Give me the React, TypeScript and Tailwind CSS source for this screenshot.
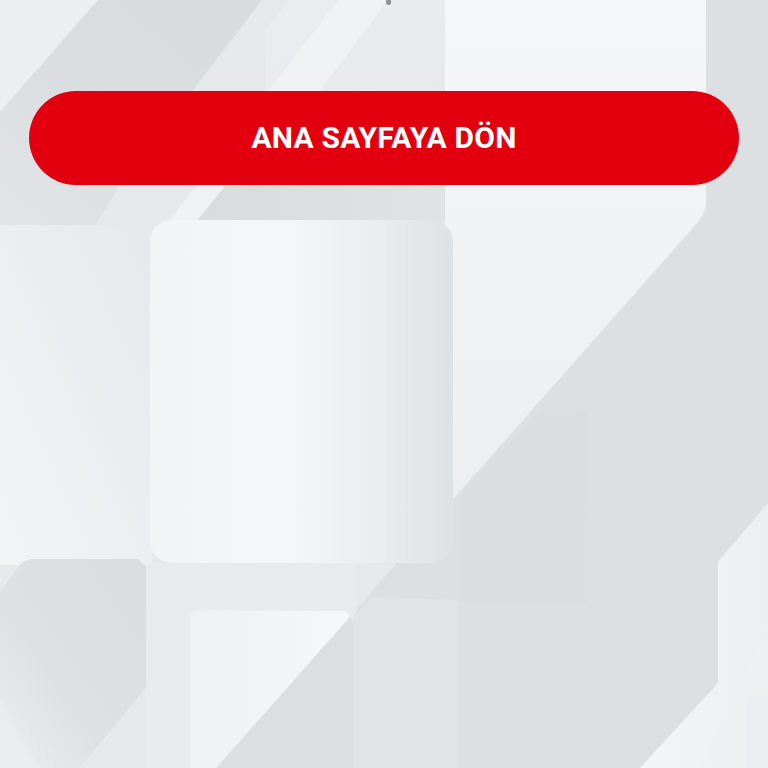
import React from "react";

function Background() {
  return (
    <svg
      className="absolute inset-0 w-full h-full"
      viewBox="0 0 768 768"
      preserveAspectRatio="none"
      xmlns="http://www.w3.org/2000/svg"
    >
      <defs>
        <linearGradient id="gDark" x1="1" y1="0" x2="0" y2="1">
          <stop offset="0" stopColor="#d9dcdf" />
          <stop offset="0.5" stopColor="#dadde0" />
          <stop offset="1" stopColor="#e2e4e7" />
        </linearGradient>
        <linearGradient id="gLeft" x1="0" y1="1" x2="1" y2="0">
          <stop offset="0" stopColor="#f3f4f6" />
          <stop offset="1" stopColor="#e6e8eb" />
        </linearGradient>
        <linearGradient id="gSquare" x1="0" y1="0" x2="1" y2="0">
          <stop offset="0" stopColor="#f3f4f6" />
          <stop offset="0.45" stopColor="#f5f6f8" />
          <stop offset="0.75" stopColor="#eaecee" />
          <stop offset="1" stopColor="#dfe2e5" />
        </linearGradient>
        <linearGradient id="gPanel" x1="0" y1="0" x2="0" y2="1">
          <stop offset="0" stopColor="#f5f6f8" />
          <stop offset="1" stopColor="#eceef0" />
        </linearGradient>
        <linearGradient id="gMidDark" x1="0" y1="0" x2="1" y2="1">
          <stop offset="0" stopColor="#dee1e4" />
          <stop offset="1" stopColor="#dcdfe2" />
        </linearGradient>
        <linearGradient id="gRight" x1="0" y1="0" x2="1" y2="0">
          <stop offset="0" stopColor="#f4f5f7" />
          <stop offset="1" stopColor="#eceef0" />
        </linearGradient>
        <linearGradient id="gBL" x1="1" y1="0" x2="0" y2="1">
          <stop offset="0" stopColor="#dadde0" />
          <stop offset="0.6" stopColor="#dee1e4" />
          <stop offset="1" stopColor="#eceef0" />
        </linearGradient>
        <linearGradient id="gBM" x1="0" y1="0" x2="1" y2="0">
          <stop offset="0" stopColor="#eef0f2" />
          <stop offset="1" stopColor="#f6f7f8" />
        </linearGradient>
        <linearGradient id="gUnder" x1="0" y1="0" x2="1" y2="0">
          <stop offset="0" stopColor="#d9dcdf" />
          <stop offset="1" stopColor="#e0e3e6" />
        </linearGradient>
        <linearGradient id="gMid" x1="0" y1="0" x2="1" y2="1">
          <stop offset="0" stopColor="#eaecef" />
          <stop offset="1" stopColor="#e6e8eb" />
        </linearGradient>
      </defs>

      {/* base */}
      <rect x="0" y="0" width="768" height="768" fill="#e6e8eb" />

      {/* top-left light corner */}
      <polygon points="0,0 98,0 0,112" fill="#eceef1" />
      {/* dark diagonal band */}
      <polygon points="98,0 262,0 118,188 96,225 0,225 0,112" fill="url(#gDark)" />
      {/* mid panel top */}
      <polygon points="290,0 445,0 445,200 265,200 265,30" fill="url(#gMid)" />
      {/* light stripe */}
      <polygon points="338,0 388,0 175,285 120,285" fill="#eff1f3" />
      {/* under-button darker */}
      <polygon points="225,186 445,186 445,222 196,222" fill="url(#gUnder)" />

      {/* left region */}
      <rect x="0" y="225" width="152" height="340" fill="url(#gLeft)" />

      {/* dark region right of long diagonal */}
      <polygon points="706,0 768,0 768,768 216,768 706,212" fill="url(#gMidDark)" />
      {/* darker block */}
      <polygon points="458,497 540,410 588,410 588,602 458,602" fill="#d9dce0" opacity="0.55" />

      {/* light top-right panel */}
      <polygon points="445,0 706,0 706,206 698,222 455,497 445,497" fill="url(#gPanel)" />

      {/* big rounded square */}
      <rect x="150" y="220" width="303" height="343" rx="22" fill="url(#gSquare)" />

      {/* below square */}
      <rect x="146" y="563" width="210" height="205" fill="#e8eaed" />
      {/* bottom-middle light */}
      <polygon points="190,616 194,610 345,611 350,617 216,768 190,768" fill="url(#gBM)" />
      {/* bottom-middle dark part */}
      <polygon points="350,617 353,622 353,768 216,768" fill="#dcdfe2" />
      {/* lighter strip between */}
      <polygon points="353,617 372,597 458,600 458,768 353,768" fill="#e1e4e7" />

      {/* bottom-left shape */}
      <polygon points="0,592 22,562 30,559 138,559 146,567 146,687 80,768 0,768" fill="url(#gBL)" />
      <polygon points="0,700 40,768 0,768" fill="#eceef0" opacity="0.5" />

      {/* right light shape */}
      <polygon points="718,562 768,503 768,768 640,768 718,683" fill="url(#gRight)" />
      <polygon points="745,697 768,697 768,768 745,768" fill="#e9ebee" opacity="0.7" />
      <polygon points="768,623 768,768 700,768" fill="#eef0f2" opacity="0.6" />
    </svg>
  );
}

export default function App() {
  return (
    <div
      className="relative w-full h-[768px] overflow-hidden bg-[#e4e7ea]"
      style={{ fontFamily: "Roboto, 'Liberation Sans', sans-serif" }}
    >
      <Background />
      <span className="absolute left-[386px] top-0 w-[5px] h-[5px] rounded-b-full bg-[#7a7d81] opacity-80" />
      <div className="relative px-[29px] pt-[91px]">
        <button
          type="button"
          className="w-full h-[94px] rounded-full bg-[#e2000f] flex items-center justify-center"
        >
          <span className="text-white font-bold text-[30px] leading-none tracking-[0.2px]">
            ANA SAYFAYA DÖN
          </span>
        </button>
      </div>
    </div>
  );
}
